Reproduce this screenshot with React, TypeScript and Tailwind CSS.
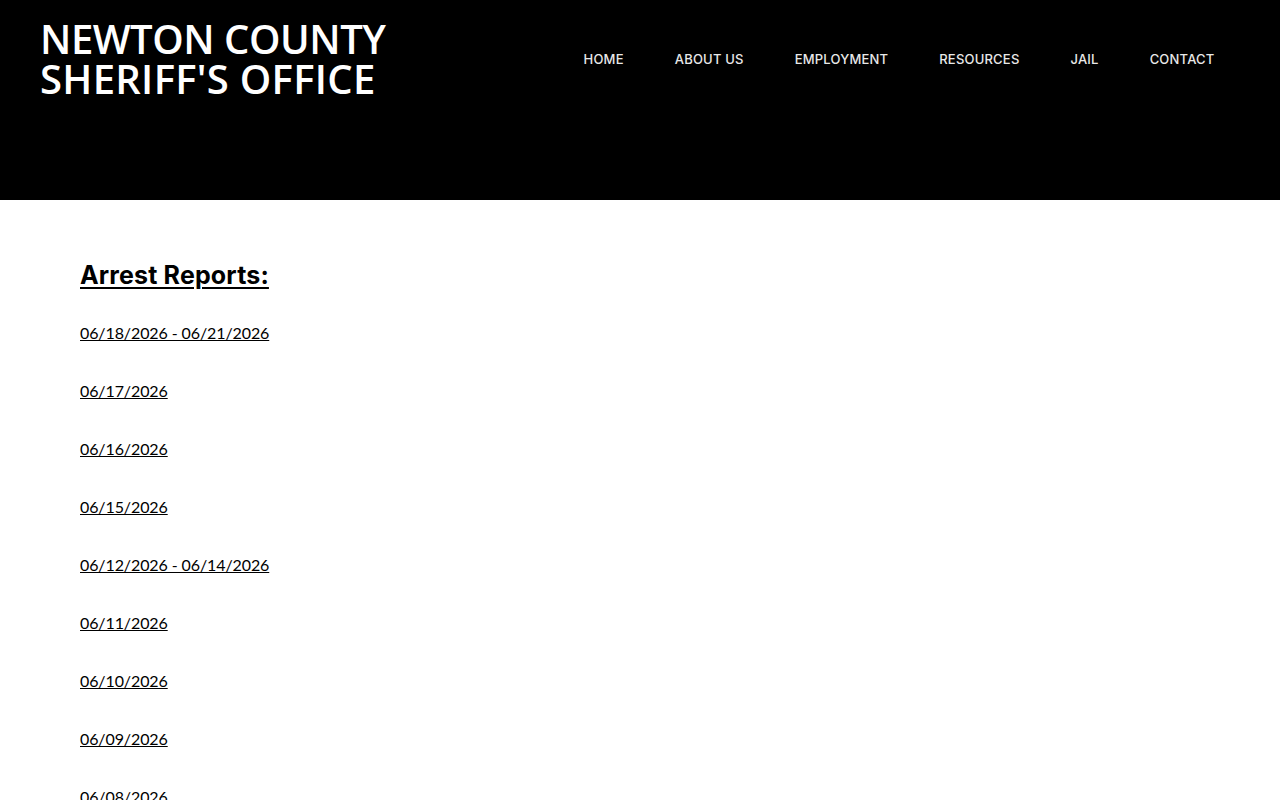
import React from 'react';

const NAV = ['HOME', 'ABOUT US', 'EMPLOYMENT', 'RESOURCES', 'JAIL', 'CONTACT'];

const REPORTS = [
  '06/18/2026 - 06/21/2026',
  '06/17/2026',
  '06/16/2026',
  '06/15/2026',
  '06/12/2026 - 06/14/2026',
  '06/11/2026',
  '06/10/2026',
  '06/09/2026',
  '06/08/2026',
  '06/05/2026 - 06/07/2026',
];

const App: React.FC = () => {
  return (
    <div className="min-h-screen bg-white">
      <header className="h-[200px] bg-black flex items-start justify-between pl-[40px] pr-[40px]">
        <h1 className="mt-[19px] text-white text-[40px] leading-[40px] font-semibold tracking-[-0.45px] font-['Open_Sans',sans-serif]">
          <span className="block">NEWTON COUNTY</span>
          <span className="block tracking-[0.3px]">SHERIFF'S OFFICE</span>
        </h1>
        <nav className="mt-[51px] flex items-center">
          {NAV.map(item => (
            <a key={item} href="#" className="px-[25.5px] text-[13px] leading-[17px] font-medium text-[#e8e8e8] tracking-[0.2px] font-['Inter',sans-serif]">
              {item}
            </a>
          ))}
        </nav>
      </header>
      <main className="px-[80px] pt-[60px]">
        <h2 className="text-[25px] leading-[30px] font-bold text-black underline underline-offset-[3px] decoration-2 tracking-[0.15px] font-['Inter',sans-serif]">
          Arrest Reports:
        </h2>
        <ul className="mt-[33px] flex flex-col gap-[38px]">
          {REPORTS.map(r => (
            <li key={r} className="leading-[20px]">
              <a href="#" className="text-[16px] leading-[20px] text-black underline tracking-[-0.1px] font-['Lato',sans-serif]">{r}</a>
            </li>
          ))}
        </ul>
      </main>
    </div>
  );
};

export default App;
